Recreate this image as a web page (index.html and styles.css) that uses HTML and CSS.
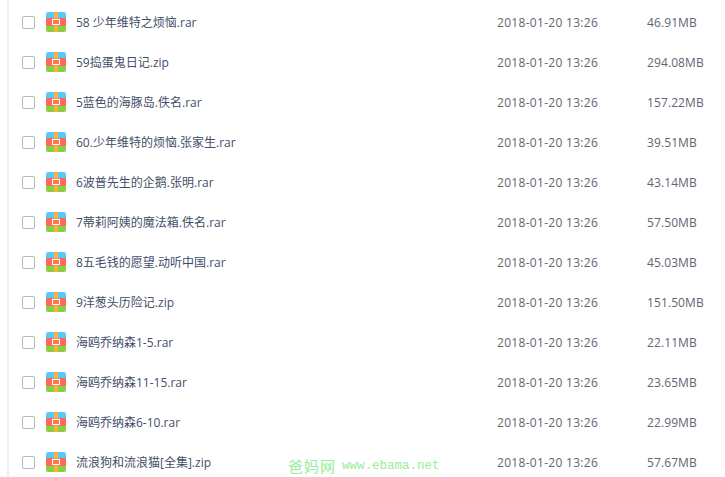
FILE: index.html
```html
<!DOCTYPE html>
<html>
<head>
  <title>文件列表</title>
  <link rel="stylesheet" href="styles.css">
</head>
<body>
  <svg class="iconDefs" width="0" height="0">
    <symbol id="rar" viewBox="0 0 20 20">
      <path d="M2 0h16a2 2 0 0 1 2 2v4H0V2a2 2 0 0 1 2-2z" fill="#5ac8fa"/>
      <rect y="6" width="20" height="8" fill="#fc6a5e"/>
      <path d="M0 14h20v4a2 2 0 0 1-2 2H2a2 2 0 0 1-2-2z" fill="#87d144"/>
      <rect x="8" width="4" height="20" fill="#fbb03b"/>
      <rect x="6.5" y="7.5" width="7" height="5" fill="#fc7a50" stroke="#fff"/>
    </symbol>
  </svg>

  <div class="fileList">
    <div class="fileRow"><span class="check"></span><svg class="fileIcon"><use href="#rar"/></svg><span class="fileName">58 少年维特之烦恼.rar</span><span class="fileDate">2018-01-20 13:26</span><span class="fileSize">46.91MB</span></div>
    <div class="fileRow"><span class="check"></span><svg class="fileIcon"><use href="#rar"/></svg><span class="fileName">59捣蛋鬼日记.zip</span><span class="fileDate">2018-01-20 13:26</span><span class="fileSize">294.08MB</span></div>
    <div class="fileRow"><span class="check"></span><svg class="fileIcon"><use href="#rar"/></svg><span class="fileName">5蓝色的海豚岛.佚名.rar</span><span class="fileDate">2018-01-20 13:26</span><span class="fileSize">157.22MB</span></div>
    <div class="fileRow"><span class="check"></span><svg class="fileIcon"><use href="#rar"/></svg><span class="fileName">60.少年维特的烦恼.张家生.rar</span><span class="fileDate">2018-01-20 13:26</span><span class="fileSize">39.51MB</span></div>
    <div class="fileRow"><span class="check"></span><svg class="fileIcon"><use href="#rar"/></svg><span class="fileName">6波普先生的企鹅.张明.rar</span><span class="fileDate">2018-01-20 13:26</span><span class="fileSize">43.14MB</span></div>
    <div class="fileRow"><span class="check"></span><svg class="fileIcon"><use href="#rar"/></svg><span class="fileName">7蒂莉阿姨的魔法箱.佚名.rar</span><span class="fileDate">2018-01-20 13:26</span><span class="fileSize">57.50MB</span></div>
    <div class="fileRow"><span class="check"></span><svg class="fileIcon"><use href="#rar"/></svg><span class="fileName">8五毛钱的愿望.动听中国.rar</span><span class="fileDate">2018-01-20 13:26</span><span class="fileSize">45.03MB</span></div>
    <div class="fileRow"><span class="check"></span><svg class="fileIcon"><use href="#rar"/></svg><span class="fileName">9洋葱头历险记.zip</span><span class="fileDate">2018-01-20 13:26</span><span class="fileSize">151.50MB</span></div>
    <div class="fileRow"><span class="check"></span><svg class="fileIcon"><use href="#rar"/></svg><span class="fileName">海鸥乔纳森1-5.rar</span><span class="fileDate">2018-01-20 13:26</span><span class="fileSize">22.11MB</span></div>
    <div class="fileRow"><span class="check"></span><svg class="fileIcon"><use href="#rar"/></svg><span class="fileName">海鸥乔纳森11-15.rar</span><span class="fileDate">2018-01-20 13:26</span><span class="fileSize">23.65MB</span></div>
    <div class="fileRow"><span class="check"></span><svg class="fileIcon"><use href="#rar"/></svg><span class="fileName">海鸥乔纳森6-10.rar</span><span class="fileDate">2018-01-20 13:26</span><span class="fileSize">22.99MB</span></div>
    <div class="fileRow"><span class="check"></span><svg class="fileIcon"><use href="#rar"/></svg><span class="fileName">流浪狗和流浪猫[全集].zip</span><span class="fileDate">2018-01-20 13:26</span><span class="fileSize">57.67MB</span></div>
  </div>

  <div class="watermark"><span class="markCn">爸妈网</span><span class="markUrl">www.ebama.net</span></div>
</body>
</html>
```
FILE: styles.css
```css
html, body {
  height: 100%;
  overflow: hidden;
}

body {
  margin: 0;
  background: #fff;
  font-family: "Open Sans", "Noto Sans CJK SC", sans-serif;
  font-size: 12px;
  color: #424e67;
}

.iconDefs {
  position: absolute;
}

.fileList {
  margin-left: 7px;
  padding-top: 2px;
  height: 100%;
  border-left: 2px solid #eceef3;
}

.fileRow {
  display: flex;
  align-items: center;
  height: 40px;
}

.check {
  flex: none;
  box-sizing: border-box;
  width: 13px;
  height: 13px;
  margin-left: 13px;
  border: 1px solid #b8b8b8;
  border-radius: 2px;
  background: #fff;
}

.fileIcon {
  flex: none;
  width: 20px;
  height: 20px;
  margin-left: 11px;
}

.fileName {
  flex: none;
  width: 421px;
  margin-left: 10px;
}

.fileDate {
  flex: none;
  width: 150px;
  color: #5f6672;
  letter-spacing: 0.3px;
}

.fileSize {
  flex: none;
  color: #5f6672;
  letter-spacing: 0.1px;
}

.watermark {
  position: absolute;
  left: 288px;
  top: 455px;
  display: flex;
  align-items: center;
  color: #9aec9a;
}

.markCn {
  font-family: "Noto Sans CJK SC", sans-serif;
  font-size: 15px;
  letter-spacing: 1px;
  margin-right: 6px;
}

.markUrl {
  font-family: "Liberation Mono", monospace;
  font-size: 12.5px;
}
```
